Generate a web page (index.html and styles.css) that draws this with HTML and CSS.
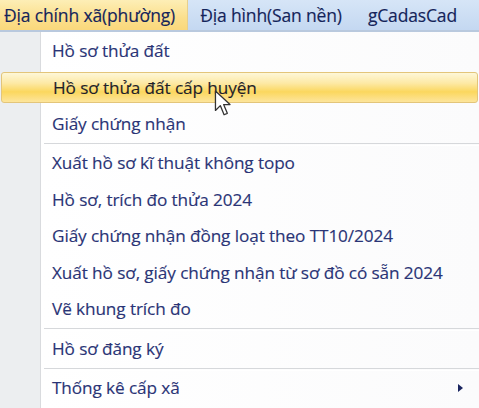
FILE: index.html
```html
<!DOCTYPE html>
<html>
<head>
<meta charset="utf-8">
<link rel="stylesheet" href="styles.css">
</head>
<body>
<div class="screen">
  <div class="menubar">
    <div class="top-item active">Địa chính xã(phường)</div>
    <div class="top-item">Địa hình(San nền)</div>
    <div class="top-item">gCadasCad</div>
  </div>
  <div class="dropdown">
    <div class="item"><span class="label">Hồ sơ thửa đất</span></div>
    <div class="item hot"><span class="label">Hồ sơ thửa đất cấp huyện</span></div>
    <div class="item"><span class="label">Giấy chứng nhận</span></div>
    <div class="sep"></div>
    <div class="item"><span class="label">Xuất hồ sơ kĩ thuật không topo</span></div>
    <div class="item"><span class="label">Hồ sơ, trích đo thửa 2024</span></div>
    <div class="item"><span class="label">Giấy chứng nhận đồng loạt theo TT10/2024</span></div>
    <div class="item"><span class="label">Xuất hồ sơ, giấy chứng nhận từ sơ đồ có sẵn 2024</span></div>
    <div class="item"><span class="label">Vẽ khung trích đo</span></div>
    <div class="sep"></div>
    <div class="item"><span class="label">Hồ sơ đăng ký</span></div>
    <div class="sep"></div>
    <div class="item"><span class="label">Thống kê cấp xã</span><span class="arrow"></span></div>
  </div>
  <svg class="cursor" width="18" height="28" viewBox="0 0 16 26">
    <path d="M1 1 L1 19 L5.5 14.5 L9 23 L12 21.7 L8.6 13.5 L14.5 13.5 Z" fill="#ffffff" stroke="#333" stroke-width="1.2" stroke-linejoin="round"/>
  </svg>
</div>
</body>
</html>
```
FILE: styles.css
```css
html, body {
  margin: 0;
  padding: 0;
}
body {
  width: 479px;
  height: 408px;
  overflow: hidden;
  background: #ffffff;
  font-family: "Open Sans", "Noto Sans", sans-serif;
}
.screen {
  position: relative;
  width: 479px;
  height: 408px;
  overflow: hidden;
}
.menubar {
  display: flex;
  height: 30px;
  background: linear-gradient(#d6e5f7, #c4d8f1);
  border-bottom: 2px solid #b9c9de;
  font-size: 17.5px;
  letter-spacing: -0.15px;
  color: #14245a;
  -webkit-text-stroke: 0.15px #14245a;
}
.top-item {
  display: flex;
  align-items: center;
  padding: 0 0 0 4px;
  margin-right: 22px;
  white-space: nowrap;
}
.top-item.active {
  width: 186px;
  background: linear-gradient(#fdeeb6, #fbdf8c 60%, #fad87c);
  border-right: 1px solid #e6cf8e;
  margin-right: 8px;
}
.dropdown {
  position: relative;
  background: linear-gradient(to right, #eceef0 0, #eceef0 40px, #d9dbde 40px, #d9dbde 41px, #ffffff 41px, #fbfbfc 100%);
  height: 376px;
  font-size: 17.2px;
  letter-spacing: -0.1px;
  color: #2a3476;
  -webkit-text-stroke: 0.15px #2a3476;
}
.item {
  height: 36.5px;
  display: flex;
  align-items: center;
  padding-left: 52px;
  padding-right: 16px;
  white-space: nowrap;
  box-sizing: border-box;
}
.item .label {
  flex: 1;
}
.item.hot {
  margin: 3px 1px 2px 1px;
  height: 31.5px;
  padding-left: 51px;
  border: 1px solid #e3c57a;
  border-radius: 3px;
  background: linear-gradient(#fef7d8 0%, #fde9a5 35%, #fbd75e 65%, #fde59c 100%);
  color: #1f1f2a;
  -webkit-text-stroke: 0.15px #1f1f2a;
}
.sep {
  height: 3px;
  margin-left: 44px;
  border-top: 1px solid #d6d8db;
  border-bottom: 1px solid #ffffff;
  box-sizing: border-box;
  position: relative;
  top: 1px;
}
.arrow {
  width: 0;
  height: 0;
  border-top: 4.5px solid transparent;
  border-bottom: 4.5px solid transparent;
  border-left: 5px solid #1a2560;
  margin-right: 0;
}
.cursor {
  position: absolute;
  left: 214px;
  top: 90px;
}
```
